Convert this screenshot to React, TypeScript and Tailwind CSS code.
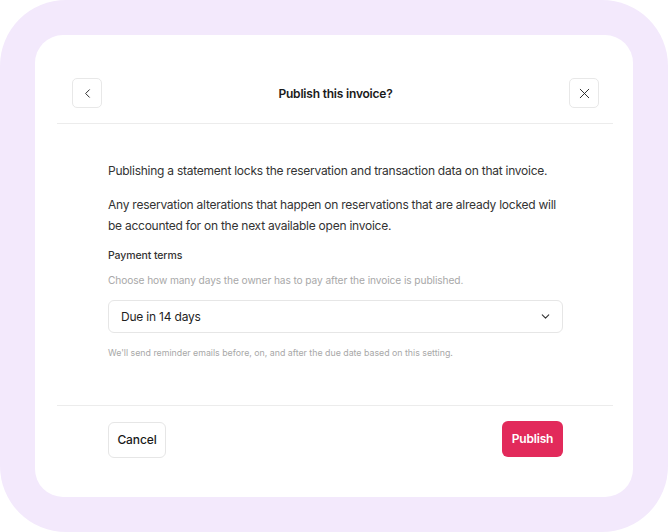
import { ChevronLeft, ChevronDown, X } from "lucide-react";

export default function App() {
  return (
    <div className="w-[668px] h-[532px] bg-white font-['Inter',sans-serif]">
      <div className="w-full h-full rounded-[66px] bg-[#f3e9fc] p-[35px]">
        <div className="w-full h-full rounded-[28px] bg-white pl-[22px] pr-[20px] flex flex-col">
          {/* Header */}
          <div className="h-[89px] pt-[43px] pl-[15px] pr-[14px] flex items-start justify-between border-b border-[#ececec]">
            <button className="w-[30px] h-[30px] rounded-[5px] border border-[#e8e8e8] flex items-center justify-center text-[#222]">
              <ChevronLeft size={15} strokeWidth={1.5} />
            </button>
            <h1 className="pt-[7px] text-[12px] font-semibold tracking-[-0.2px] text-[#1a1a1a]">
              Publish this invoice?
            </h1>
            <button className="w-[30px] h-[30px] rounded-[5px] border border-[#e8e8e8] flex items-center justify-center text-[#222]">
              <X size={17} strokeWidth={1.3} />
            </button>
          </div>

          {/* Body */}
          <div className="flex-1 pl-[51px] pr-[50px] pt-[36px] border-b border-[#ececec]">
            <p className="text-[12px] leading-[21px] tracking-[-0.25px] text-[#333]">
              Publishing a statement locks the reservation and transaction data on that invoice.
            </p>
            <p className="mt-[13px] text-[12px] leading-[21px] tracking-[-0.25px] text-[#333]">
              Any reservation alterations that happen on reservations that are already locked will
              be accounted for on the next available open invoice.
            </p>
            <div className="mt-[12px] text-[10.5px] font-medium tracking-[-0.1px] text-[#333]">Payment terms</div>
            <div className="mt-[9px] text-[10.2px] tracking-[-0.1px] text-[#a8a8a8]">
              Choose how many days the owner has to pay after the invoice is published.
            </div>
            <button className="mt-[12px] w-[455px] h-[33px] rounded-[6px] border border-[#e6e6e6] pl-[12px] pr-[10px] flex items-center justify-between text-[12px] tracking-[-0.2px] text-[#1f1f1f]">
              <span>Due in 14 days</span>
              <ChevronDown size={13} strokeWidth={2} className="text-[#333]" />
            </button>
            <div className="mt-[13px] text-[8.8px] text-[#a8a8a8]">
              We'll send reminder emails before, on, and after the due date based on this setting.
            </div>
          </div>

          {/* Footer */}
          <div className="h-[91px] pl-[51px] pr-[50px] pt-[15px] flex items-start justify-between">
            <button className="mt-[1px] w-[58px] h-[36px] rounded-[6px] border border-[#e6e6e6] text-[12px] font-medium tracking-[-0.1px] text-[#1a1a1a]">
              Cancel
            </button>
            <button className="w-[61px] h-[36px] rounded-[6px] bg-[#e22a5b] text-[12px] font-semibold tracking-[-0.2px] text-white">
              Publish
            </button>
          </div>
        </div>
      </div>
    </div>
  );
}
